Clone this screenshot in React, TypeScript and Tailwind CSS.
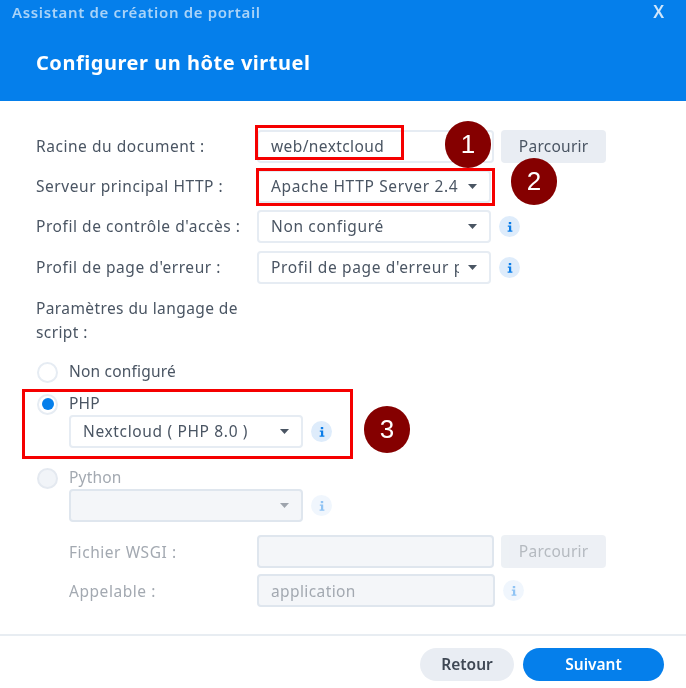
import type { ReactNode } from "react";

const font = { fontFamily: '"Noto Sans", sans-serif' };

function Caret({ faded }: { faded?: boolean }) {
  return (
    <svg width="9" height="5" viewBox="0 0 9 5" className={faded ? "opacity-50" : ""}>
      <path d="M0 0h9L4.5 5z" fill="#4a5563" />
    </svg>
  );
}

function Info({ faded }: { faded?: boolean }) {
  return (
    <span className={`flex h-[21px] w-[21px] shrink-0 items-center justify-center rounded-full bg-[#deecfb] ${faded ? "opacity-45" : ""}`}>
      <svg width="6" height="10" viewBox="0 0 6 10">
        <rect x="1.8" y="0" width="2.4" height="2.2" fill="#0b7de8" />
        <path d="M0.8 3.4h3.4v5h1.2v1.4H0.6V8.4h1.4V4.8H0.8z" fill="#0b7de8" />
      </svg>
    </span>
  );
}

function Select({ text, width = "w-[234px]", disabled }: { text?: string; width?: string; disabled?: boolean }) {
  return (
    <div className={`flex h-[33px] ${width} items-center justify-between rounded-[4px] border-2 pl-[12px] pr-[12px] ${disabled ? "border-[#dfe6ee] bg-[#f4f6f9]" : "border-[#e6ecf3] bg-white"}`}>
      <span className="w-[188px] overflow-hidden whitespace-nowrap text-[15.5px] tracking-[0.65px] text-[#4a5563]">{text}</span>
      <span className="shrink-0"><Caret faded={disabled} /></span>
    </div>
  );
}

function Field({ text, disabled, width = "w-[238px]" }: { text?: string; disabled?: boolean; width?: string }) {
  return (
    <div className={`flex h-[33px] ${width} items-center rounded-[4px] border-2 pl-[12px] text-[15.5px] tracking-[0.4px] ${disabled ? "border-[#dfe6ee] bg-[#f4f6f9] pt-[2px] text-[#a3a9b1]" : "border-[#e6ecf3] bg-white text-[#4a5563]"}`}>
      {text}
    </div>
  );
}

function Browse({ disabled }: { disabled?: boolean }) {
  return (
    <div className={`ml-[7px] flex h-[33px] w-[105px] items-center justify-center rounded-[4px] bg-[#e9edf3] text-[15.5px] tracking-[0.25px] ${disabled ? "text-[#a3a9b1] opacity-80" : "text-[#4a5563]"}`}>
      Parcourir
    </div>
  );
}

function Row({ label, className = "", faded, children }: { label: string; className?: string; faded?: boolean; children: ReactNode }) {
  return (
    <div className={`flex h-[33px] items-center ${className}`}>
      <span className={`whitespace-nowrap text-[15.5px] tracking-[0.55px] ${faded ? "pt-[2px] text-[#a3a9b1]" : "text-[#4a5563]"}`}>{label}</span>
      <div className="ml-auto flex w-[349px] items-center">{children}</div>
    </div>
  );
}

function Radio({ checked, disabled, label }: { checked?: boolean; disabled?: boolean; label: string }) {
  return (
    <div className="flex h-[22px] items-center gap-[11px]">
      <span className={`flex h-[21px] w-[21px] items-center justify-center rounded-full border-2 ${disabled ? "border-[#e4e9f0] bg-[#f1f4f8]" : "border-[#e6ecf3] bg-white"}`}>
        {checked && <span className="h-[12px] w-[12px] rounded-full bg-[#057feb]" />}
      </span>
      <span className={`text-[15.5px] tracking-[0.2px] ${disabled ? "text-[#a3a9b1]" : "text-[#4a5563]"}`}>{label}</span>
    </div>
  );
}

function Badge({ n, className }: { n: number; className: string }) {
  return (
    <span className={`absolute flex h-[47px] w-[46px] items-center justify-center rounded-full bg-[#850000] font-['Liberation_Sans',sans-serif] text-[26px] text-white ${className}`}>
      {n}
    </span>
  );
}

export default function App() {
  return (
    <div className="relative h-[688px] w-[686px] overflow-hidden bg-white blur-[0.4px]" style={font}>
      {/* Header */}
      <header className="h-[101px] bg-[#057feb] pl-[12px] pr-[20px] pt-[1px]">
        <div className="flex h-[22px] items-center justify-between">
          <span className="text-[15px] font-semibold tracking-[0.65px] text-[#a9d3f8]">Assistant de création de portail</span>
          <span className="mr-[2px] text-[17px] font-semibold text-[#cfe6fb]">X</span>
        </div>
        <h1 className="ml-[24px] mt-[27px] text-[20px] font-bold leading-[26px] tracking-[0.53px] text-white">Configurer un hôte virtuel</h1>
      </header>

      {/* Form */}
      <div className="pl-[36px] pr-[80px] pt-[29px]">
        <Row label="Racine du document :">
          <Field text="web/nextcloud" />
          <Browse />
        </Row>
        <Row label="Serveur principal HTTP :" className="mt-[7px]">
          <Select text="Apache HTTP Server 2.4" />
        </Row>
        <Row label="Profil de contrôle d'accès :" className="mt-[7px]">
          <Select text="Non configuré" />
          <span className="ml-[8px]"><Info /></span>
        </Row>
        <Row label="Profil de page d'erreur :" className="mt-[8px]">
          <Select text="Profil de page d'erreur p" />
          <span className="ml-[8px]"><Info /></span>
        </Row>
        <p className="mt-[12px] w-[220px] text-[15.5px] leading-[24px] tracking-[0.4px] text-[#4a5563]">
          Paramètres du langage de script :
        </p>

        <div className="ml-px mt-[17px] flex flex-col">
          <Radio label="Non configuré" />
          <div className="mt-[10px]"><Radio checked label="PHP" /></div>
          <div className="ml-[32px] flex items-center gap-[8px]">
            <Select text="Nextcloud ( PHP 8.0 )" width="w-[234px]" />
            <Info />
          </div>
          <div className="mt-[19px]"><Radio disabled label="Python" /></div>
          <div className="ml-[32px] flex items-center gap-[8px]">
            <Select disabled width="w-[234px]" />
            <Info faded />
          </div>
        </div>

        <div className="ml-[33px]">
          <Row label="Fichier WSGI :" faded className="mt-[13px]">
            <Field disabled />
            <Browse disabled />
          </Row>
          <Row label="Appelable :" faded className="mt-[6px]">
            <Field disabled text="application" />
            <span className="ml-[8px]"><Info faded /></span>
          </Row>
        </div>
      </div>

      {/* Footer */}
      <footer className="mt-[27px] flex justify-end gap-[9px] border-t-2 border-[#e8edf2] pr-[22px] pt-[12px]">
        <div className="flex h-[33px] w-[94px] items-center justify-center rounded-full bg-[#e9edf3] text-[15.5px] font-semibold text-[#3f4854]">Retour</div>
        <div className="flex h-[33px] w-[141px] items-center justify-center rounded-full bg-[#057feb] text-[15.5px] font-semibold text-white">Suivant</div>
      </footer>

      {/* Annotations */}
      <span className="absolute left-[255px] top-[125px] h-[35px] w-[149px] border-[3px] border-[#f50000]" />
      <span className="absolute left-[256px] top-[168px] h-[38px] w-[239px] border-[3px] border-[#f50000]" />
      <span className="absolute left-[22px] top-[389px] h-[70px] w-[331px] border-[3px] border-[#f50000]" />
      <Badge n={1} className="left-[445px] top-[121px]" />
      <Badge n={2} className="left-[511px] top-[158px]" />
      <Badge n={3} className="left-[364px] top-[406px]" />
    </div>
  );
}
